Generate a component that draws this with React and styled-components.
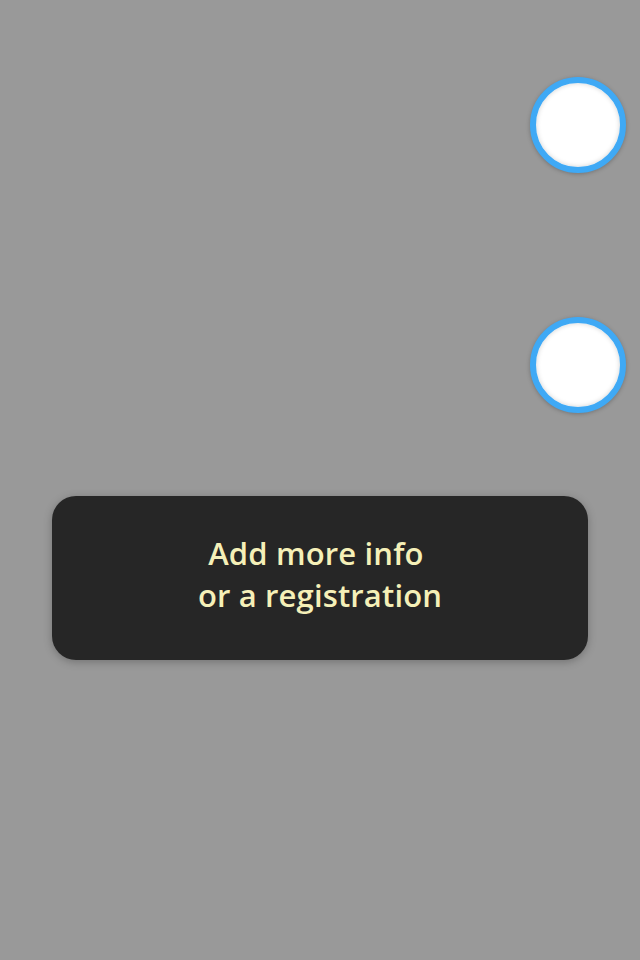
import styled, { createGlobalStyle } from 'styled-components';

const GlobalStyle = createGlobalStyle`
	html,
	body {
		margin: 0;
		padding: 0;
		background: #999999;
	}
	* {
		box-sizing: border-box;
	}
`;

const Page = styled.div`
	min-height: 100vh;
	background: #999999;
	padding-top: 77px;
	display: flex;
	flex-direction: column;
	font-family: 'Open Sans', 'Noto Sans', sans-serif;
`;
const HandleColumn = styled.div`
	display: flex;
	flex-direction: column;
	align-items: flex-end;
	gap: 144px;
	padding-right: 14px;
`;
const Handle = styled.div`
	width: 96px;
	height: 96px;
	border-radius: 50%;
	background: #ffffff;
	border: 6px solid #3fa9f5;
	box-shadow: inset 0 0 5px rgba(0, 0, 0, 0.18), 0 1px 4px rgba(0, 0, 0, 0.25);
`;
const Prompt = styled.div`
	margin: 83px 0 0 52px;
	width: 536px;
	height: 164px;
	border-radius: 24px;
	background: #262626;
	box-shadow: 0 2px 8px rgba(0, 0, 0, 0.25);
	display: flex;
	align-items: center;
	justify-content: center;
	text-align: center;
	color: #f5f0b8;
	font-size: 31px;
	font-weight: 600;
	letter-spacing: 0.15px;
	line-height: 42px;
	padding-bottom: 8px;
`;

const App = () => {
	return (
		<>
			<GlobalStyle />
			<Page>
				<HandleColumn>
					<Handle />
					<Handle />
				</HandleColumn>
				<Prompt>
					Add more info&nbsp;
					<br />
					or a registration
				</Prompt>
			</Page>
		</>
	);
};
export default App;
